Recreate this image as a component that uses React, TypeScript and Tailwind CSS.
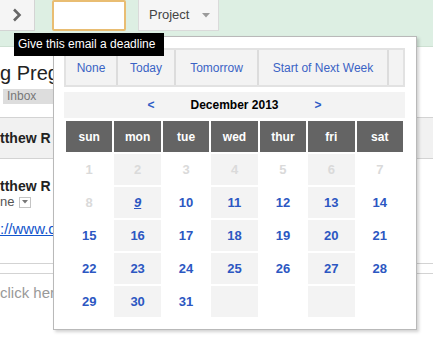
const WEEKDAYS = ['sun', 'mon', 'tue', 'wed', 'thur', 'fri', 'sat']

const QUICK = [
  { label: 'None', w: 'w-[52px]' },
  { label: 'Today', w: 'w-[58px]' },
  { label: 'Tomorrow', w: 'w-[83px]' },
  { label: 'Start of Next Week', w: 'w-[130px]' },
]

// December 2013 starts on a sunday; 9 is today, earlier days are past
const DAYS: (number | null)[] = [
  ...Array.from({ length: 31 }, (_, i) => i + 1),
  null,
  null,
  null,
  null,
]

function DayCell({ day, col }: { day: number | null; col: number }) {
  const shaded = col % 2 === 1
  const past = day !== null && day < 9
  const today = day === 9
  return (
    <div
      className={`h-[31px] flex items-center justify-center text-[13px] font-bold ${
        shaded ? 'bg-[#f3f3f3]' : 'bg-white'
      } ${past ? 'text-[#dadada]' : 'text-[#2c57c2]'}`}
    >
      {today ? <span className="italic underline">{day}</span> : day}
    </div>
  )
}

function DeadlinePicker() {
  return (
    <div className="absolute left-[53px] top-[36px] w-[364px] bg-white border border-[#b9b9b9] shadow-[2px_2px_3px_rgba(0,0,0,0.18)] pt-[11px] pl-[10px] pr-[11px] pb-[12px]">
      <div className="h-[39px] flex bg-[#f3f3f3] border-2 border-[#e2e2e2]">
        {QUICK.map((q) => (
          <div
            key={q.label}
            className={`${q.w} h-full flex items-center justify-center border-r-2 border-[#dcdcdc] text-[12px] text-[#3a63c5] whitespace-nowrap`}
          >
            {q.label}
          </div>
        ))}
      </div>

      <div className="mt-[5px] h-[26px] bg-[#f3f3f3] flex items-center justify-center gap-[36px] text-[12px] font-bold">
        <span className="text-[#2f5bc6]">&lt;</span>
        <span className="text-black">December 2013</span>
        <span className="text-[#2f5bc6]">&gt;</span>
      </div>

      <div className="mt-[3px] px-[2px] grid grid-cols-7 gap-[2px]">
        {WEEKDAYS.map((d) => (
          <div
            key={d}
            className="h-[31px] bg-[#646464] text-white text-[12px] font-bold flex items-center justify-center"
          >
            {d}
          </div>
        ))}
        {DAYS.map((day, i) => (
          <DayCell key={i} day={day} col={i % 7} />
        ))}
      </div>
    </div>
  )
}

export default function App() {
  return (
    <div className="relative w-[433px] h-[346px] overflow-hidden bg-white font-['Liberation_Sans',Arial,sans-serif]">
      {/* toolbar */}
      <div className="h-[47px] bg-[#ddefe3] border-b border-[#cde0d2] flex items-start">
        <div className="w-[35px] h-[31px] bg-[#f5f5f5] border-r border-b border-[#d4d4d4] flex items-center justify-center">
          <svg width="10" height="14" viewBox="0 0 10 14">
            <path d="M2 1.5 L7.5 7 L2 12.5" fill="none" stroke="#666" strokeWidth="2.6" />
          </svg>
        </div>
        <div className="ml-[17px] w-[74px] h-[31px] bg-white border-2 border-[#e9bd72] rounded-[2px]" />
        <div className="ml-[12px] w-[81px] h-[31px] bg-[#f5f5f5] border border-t-0 border-[#dadada] flex items-center pl-[10px] pr-[8px]">
          <span className="text-[13px] text-[#444]">Project</span>
          <svg className="ml-auto" width="8" height="5" viewBox="0 0 8 5">
            <path d="M0 0 H8 L4 4.5 Z" fill="#9a9a9a" />
          </svg>
        </div>
      </div>

      {/* mail underneath: only the strip left of the picker shows */}
      <div className="h-[42px] pt-[14px]">
        <div className="text-[20px] leading-[24px] text-[#222] whitespace-nowrap">g Preg</div>
      </div>
      <div className="h-[15px] pl-[3px] flex">
        <div className="w-[50px] bg-[#dddddd] text-[#777] text-[12px] leading-[15px] pl-[4px] whitespace-nowrap">
          Inbox
        </div>
      </div>
      <div className="h-[13px]" />
      <div className="h-[42px] bg-[#f1f1f1] border-y border-[#d3d3d3] flex items-center">
        <span className="text-[14px] font-bold text-[#222] whitespace-nowrap">tthew R</span>
      </div>
      <div className="h-[105px] border-b border-[#d3d3d3] pt-[18px]">
        <div className="text-[14px] leading-[18px] font-bold text-[#222] whitespace-nowrap">tthew R</div>
        <div className="h-[14px] flex items-center text-[13px] text-[#555]">
          <span>ne</span>
          <span className="ml-[5px] w-[12px] h-[11px] border border-[#c4c4c4] bg-white flex items-center justify-center">
            <svg width="6" height="4" viewBox="0 0 6 4">
              <path d="M0 0 H6 L3 3.5 Z" fill="#777" />
            </svg>
          </span>
        </div>
        <div className="mt-[11px] text-[15px] leading-[17px] text-[#1155cc] underline whitespace-nowrap">
          ://www.d
        </div>
      </div>
      <div className="h-[9px]" />
      <div className="border-t border-[#d3d3d3] pt-[10px]">
        <div className="text-[15px] leading-[18px] text-[#999] whitespace-nowrap">click here</div>
      </div>

      <DeadlinePicker />

      <div className="absolute left-[14px] top-[33px] z-10 w-[150px] h-[23px] bg-black text-white text-[12px] leading-[23px] pl-[4px] whitespace-nowrap">
        Give this email a deadline
      </div>
    </div>
  )
}
